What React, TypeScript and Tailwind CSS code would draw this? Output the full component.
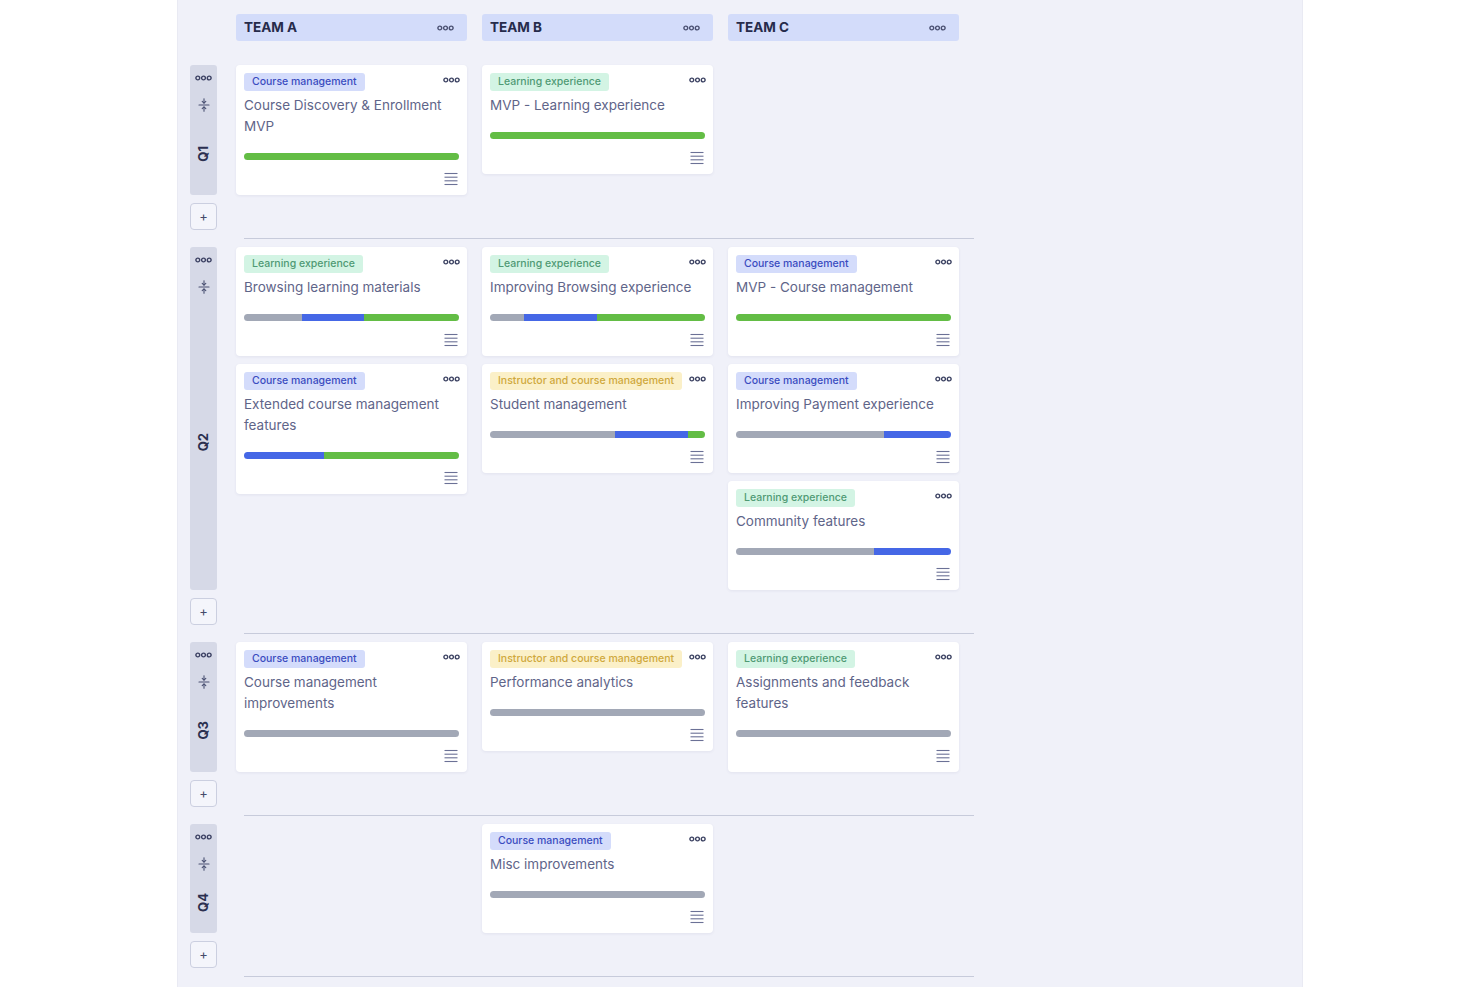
import React from 'react';

type Tag = 'course' | 'learning' | 'instructor';

type Item = {
  tag: Tag;
  title: string;
  // progress split in percent: done is green, in progress blue, rest gray
  gray: number;
  blue: number;
  green: number;
};

type Quarter = {
  label: string;
  columns: Item[][];
};

const tagStyles: Record<Tag, { text: string; className: string }> = {
  course: { text: 'Course management', className: 'bg-[#d4dcfb] text-[#3a4cc0]' },
  learning: { text: 'Learning experience', className: 'bg-[#d3f4e4] text-[#4f9a74]' },
  instructor: { text: 'Instructor and course management', className: 'bg-[#fbf0c8] text-[#cfa83c]' },
};

const teams = ['TEAM A', 'TEAM B', 'TEAM C'];

const quarters: Quarter[] = [
  {
    label: 'Q1',
    columns: [
      [{ tag: 'course', title: 'Course Discovery & Enrollment MVP', gray: 0, blue: 0, green: 100 }],
      [{ tag: 'learning', title: 'MVP - Learning experience', gray: 0, blue: 0, green: 100 }],
      [],
    ],
  },
  {
    label: 'Q2',
    columns: [
      [
        { tag: 'learning', title: 'Browsing learning materials', gray: 27, blue: 29, green: 44 },
        { tag: 'course', title: 'Extended course management features', gray: 0, blue: 37, green: 63 },
      ],
      [
        { tag: 'learning', title: 'Improving Browsing experience', gray: 16, blue: 34, green: 50 },
        { tag: 'instructor', title: 'Student management', gray: 58, blue: 34, green: 8 },
      ],
      [
        { tag: 'course', title: 'MVP - Course management', gray: 0, blue: 0, green: 100 },
        { tag: 'course', title: 'Improving Payment experience', gray: 69, blue: 31, green: 0 },
        { tag: 'learning', title: 'Community features', gray: 64, blue: 36, green: 0 },
      ],
    ],
  },
  {
    label: 'Q3',
    columns: [
      [{ tag: 'course', title: 'Course management improvements', gray: 100, blue: 0, green: 0 }],
      [{ tag: 'instructor', title: 'Performance analytics', gray: 100, blue: 0, green: 0 }],
      [{ tag: 'learning', title: 'Assignments and feedback features', gray: 100, blue: 0, green: 0 }],
    ],
  },
  {
    label: 'Q4',
    columns: [
      [],
      [{ tag: 'course', title: 'Misc improvements', gray: 100, blue: 0, green: 0 }],
      [],
    ],
  },
];

const Dots = ({ className = '' }: { className?: string }) => (
  <svg width="17" height="6" viewBox="0 0 17 6" className={className} fill="none" stroke="currentColor" strokeWidth="1.4">
    <circle cx="2.8" cy="3" r="1.9" />
    <circle cx="8.5" cy="3" r="1.9" />
    <circle cx="14.2" cy="3" r="1.9" />
  </svg>
);

const Collapse = () => (
  <svg width="12" height="14" viewBox="0 0 12 14" fill="none" stroke="currentColor" strokeWidth="1.1" strokeLinecap="round" strokeLinejoin="round">
    <path d="M1 7h10" />
    <path d="M6 0.8v4.2" />
    <path d="M4.2 3.4 6 5.2l1.8-1.8" />
    <path d="M6 13.2V9" />
    <path d="M4.2 10.6 6 8.8l1.8 1.8" />
  </svg>
);

const Lines = () => (
  <svg width="14" height="14" viewBox="0 0 14 14" fill="none" stroke="currentColor" strokeWidth="1.1">
    <path d="M0.5 1.5h13" />
    <path d="M0.5 5.2h13" />
    <path d="M0.5 8.8h13" />
    <path d="M0.5 12.5h13" />
  </svg>
);

const Progress = ({ gray, blue, green }: Pick<Item, 'gray' | 'blue' | 'green'>) => (
  <div className="mt-4 flex h-[7px] overflow-hidden rounded-full">
    {gray > 0 && <div className="h-full bg-[#a2a8b6]" style={{ width: `${gray}%` }} />}
    {blue > 0 && <div className="h-full bg-[#4567e6]" style={{ width: `${blue}%` }} />}
    {green > 0 && <div className="h-full bg-[#63bd45]" style={{ width: `${green}%` }} />}
  </div>
);

const Card = ({ item }: { item: Item }) => {
  const tag = tagStyles[item.tag];
  return (
    <div className="rounded-[4px] bg-white px-2 pt-2 pb-[9px] shadow-[0_1px_3px_rgba(60,70,120,0.08)]">
      <div className="flex items-start justify-between">
        <span className={`rounded-[3px] px-2 text-[10.5px] leading-[18px] font-medium whitespace-nowrap ${tag.className}`}>{tag.text}</span>
        <Dots className="mt-[4px] mr-[-1px] text-[#3c4262]" />
      </div>
      <p className="mt-1 text-[13.5px] leading-[21px] text-[#5f6589]">{item.title}</p>
      <Progress gray={item.gray} blue={item.blue} green={item.green} />
      <div className="mt-3 flex justify-end pr-[1px] text-[#6b7196]">
        <Lines />
      </div>
    </div>
  );
};

const QuarterRow = ({ quarter }: { quarter: Quarter }) => (
  <div>
    <div className="flex gap-[19px]">
      <div className="flex w-[27px] flex-col items-center rounded-[3px] bg-[#d6d9e7] pt-[10px] text-[#3b4062]">
        <Dots />
        <div className="mt-[17px] text-[#4a5072]">
          <Collapse />
        </div>
        <div className="flex flex-1 items-center justify-center">
          <span className="rotate-180 text-[13px] font-bold text-[#2b3050] [writing-mode:vertical-rl]">{quarter.label}</span>
        </div>
      </div>
      <div className="grid grid-cols-[231px_231px_231px] gap-x-[15px]">
        {quarter.columns.map((col, i) => (
          <div key={i} className="flex flex-col gap-2">
            {col.map((item) => (
              <Card key={item.title} item={item} />
            ))}
          </div>
        ))}
      </div>
    </div>
    <button className="mt-2 flex h-[27px] w-[27px] items-center justify-center rounded-[4px] border border-[#cbcfe0] bg-[#f4f5fb] text-[13px] leading-none text-[#454b6b]">
      +
    </button>
    <div className="mt-2 ml-[54px] h-px w-[730px] bg-[#c7cbdb]" />
  </div>
);

export default function App() {
  return (
    <div className="min-h-[987px] bg-white font-['Inter',sans-serif]">
      <div className="mx-auto min-h-[987px] w-[1126px] border-x border-[#e9eaf3] bg-[#f0f1f9] pt-[14px] pl-[12px]">
        <div className="ml-[46px] flex gap-[15px]">
          {teams.map((t) => (
            <div key={t} className="flex h-[27px] w-[231px] items-center justify-between rounded-[3px] bg-[#d3dcfa] pr-[13px] pl-2">
              <span className="text-[13.5px] font-bold text-[#262b4b]">{t}</span>
              <Dots className="text-[#4a5072]" />
            </div>
          ))}
        </div>
        <div className="mt-6 flex flex-col gap-2">
          {quarters.map((q) => (
            <QuarterRow key={q.label} quarter={q} />
          ))}
        </div>
      </div>
    </div>
  );
}
